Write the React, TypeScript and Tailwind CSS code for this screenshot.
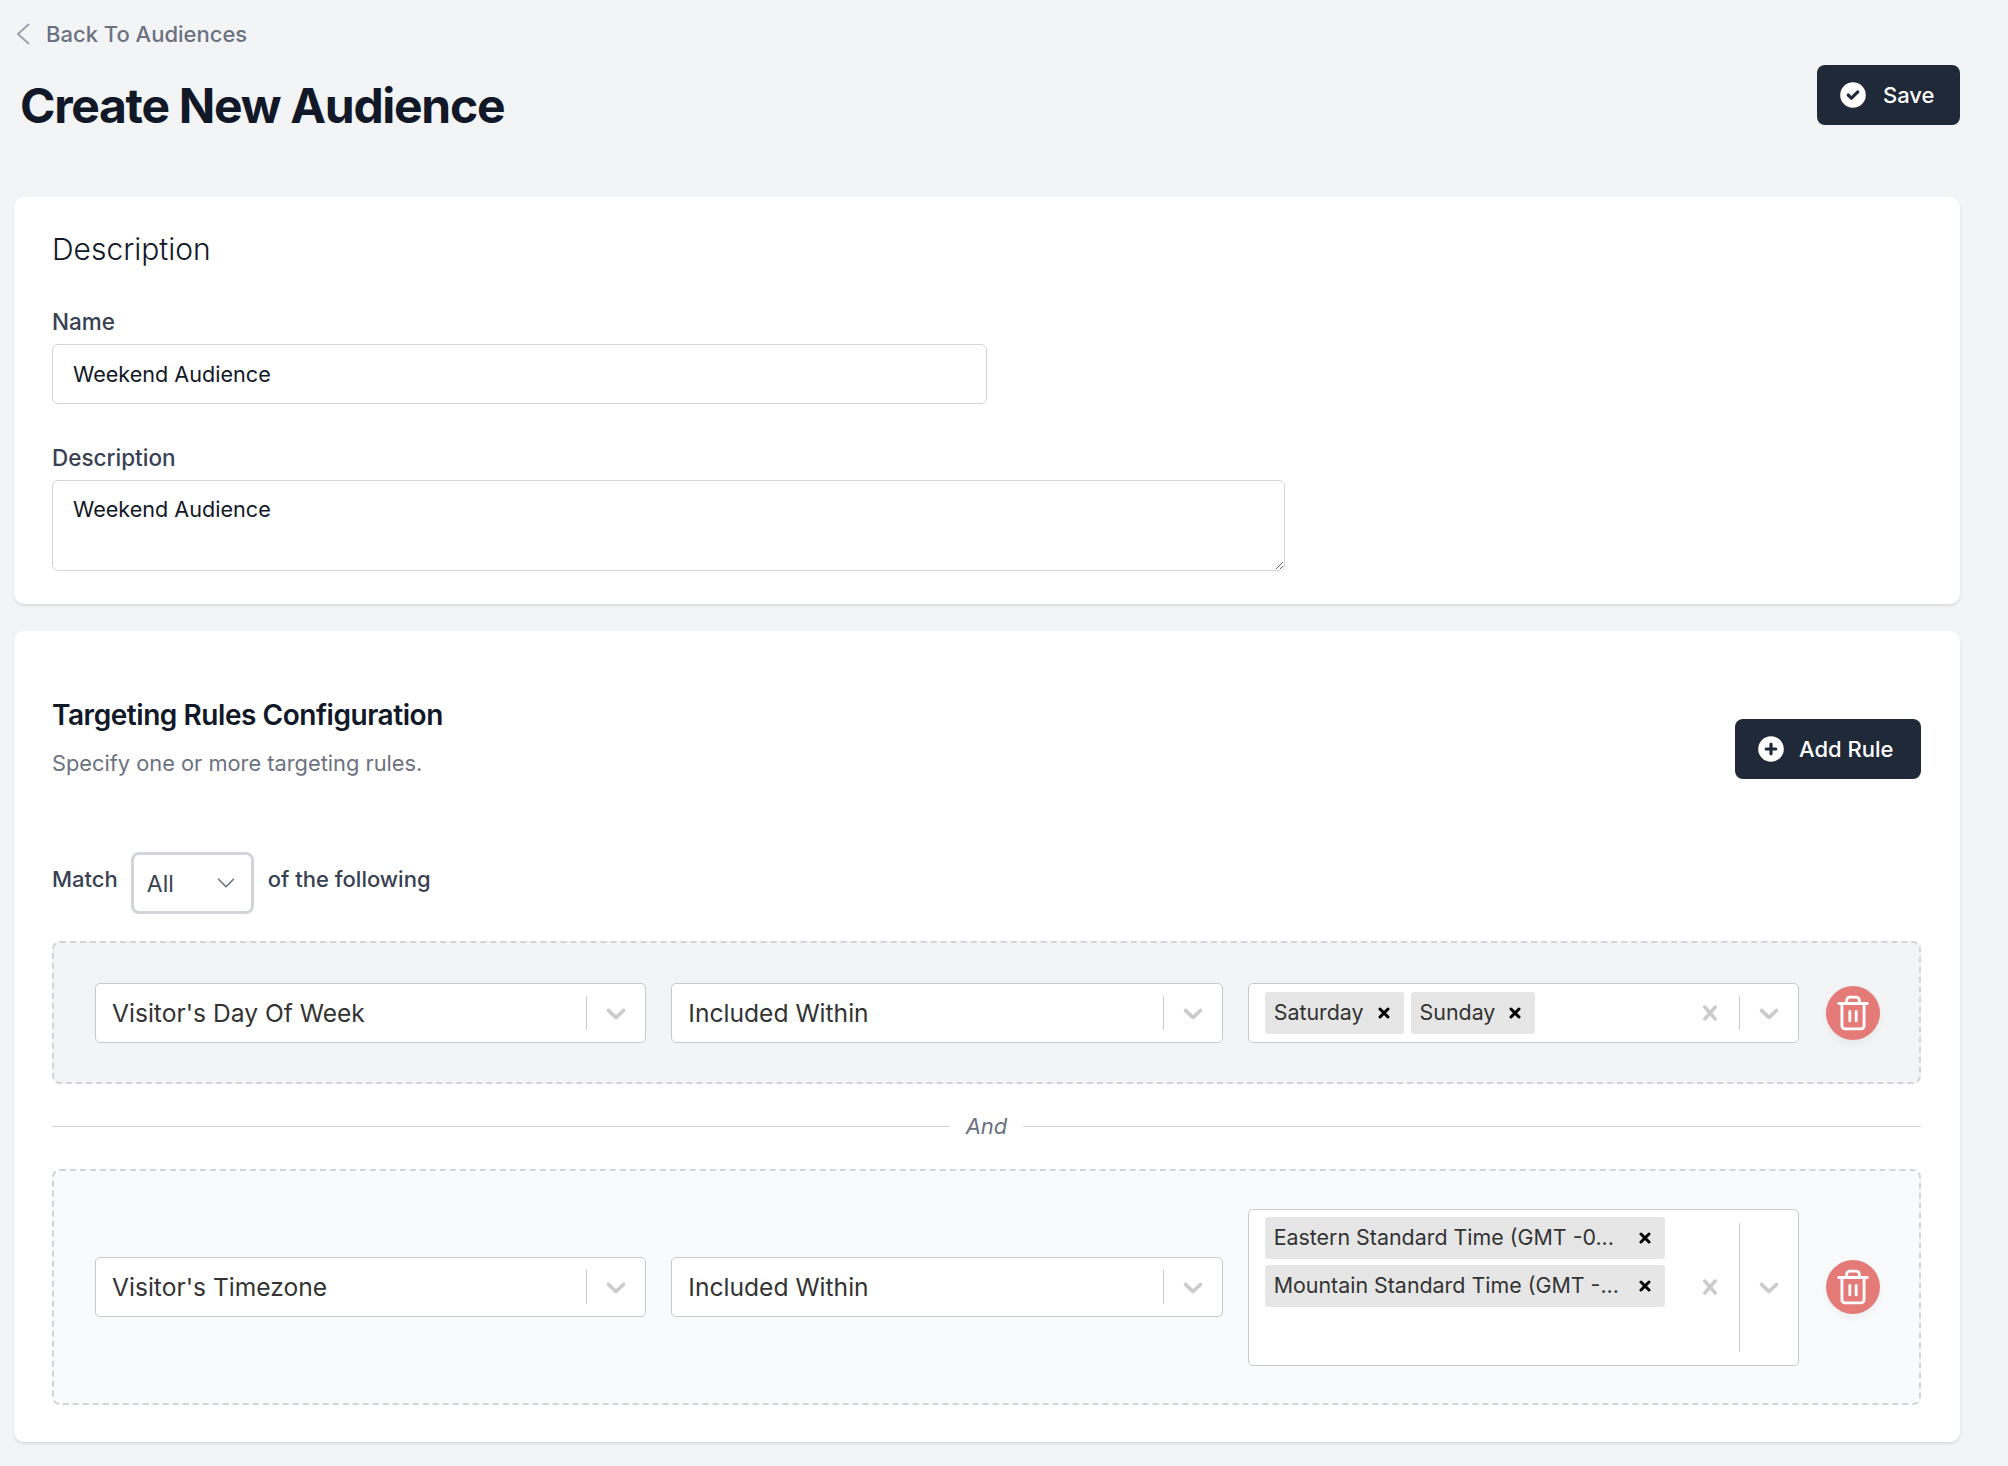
import type { ReactNode } from "react";
import { ChevronDown, Trash2 } from "lucide-react";
import { HiCheckCircle, HiPlusCircle } from "react-icons/hi";

function Chevron() {
  return (
    <svg viewBox="0 0 20 20" className="w-[32px] h-[32px] fill-[#cccccc]">
      <path d="M4.516 7.548c0.436-0.446 1.043-0.481 1.576 0l3.908 3.747 3.908-3.747c0.533-0.481 1.141-0.446 1.574 0 0.436 0.445 0.408 1.197 0 1.615-0.406 0.418-4.695 4.502-4.695 4.502-0.217 0.223-0.502 0.335-0.787 0.335s-0.57-0.112-0.789-0.335c0 0-4.287-4.084-4.695-4.502s-0.436-1.17 0-1.615z" />
    </svg>
  );
}

function Clear() {
  return (
    <svg viewBox="0 0 20 20" className="w-[30px] h-[30px] fill-[#cccccc]">
      <path d="M14.348 14.849c-0.469 0.469-1.229 0.469-1.697 0l-2.651-3.030-2.651 3.029c-0.469 0.469-1.229 0.469-1.697 0-0.469-0.469-0.469-1.229 0-1.697l2.758-3.15-2.759-3.152c-0.469-0.469-0.469-1.228 0-1.697s1.228-0.469 1.697 0l2.652 3.031 2.651-3.031c0.469-0.469 1.228-0.469 1.697 0s0.469 1.229 0 1.697l-2.758 3.152 2.758 3.15c0.469 0.469 0.469 1.229 0 1.698z" />
    </svg>
  );
}

function Select({ value }: { value: string }) {
  return (
    <div className="flex-1 h-[60px] bg-white border border-[#c6c9ce] rounded-[5px] flex items-center min-w-0">
      <span className="flex-1 pl-[16px] text-[24.6px] leading-[32px] text-[#333333] truncate">{value}</span>
      <span className="w-px h-[34px] bg-[#cccccc]" />
      <span className="w-[58px] flex items-center justify-center">
        <Chevron />
      </span>
    </div>
  );
}

function Chip({ label, wide }: { label: string; wide?: boolean }) {
  return (
    <span className={`h-[42px] bg-[#e6e6e6] rounded-[3px] flex items-center pl-[9px] text-[21.4px] text-[#333333] whitespace-nowrap ${wide ? "w-[400px]" : ""}`}>
      <span className={wide ? "flex-1" : ""}>{label}</span>
      <span className="w-[40px] flex items-center justify-center">
        <svg viewBox="0 0 12 12" className="w-[12px] h-[12px] stroke-black" strokeWidth="3" strokeLinecap="round">
          <path d="M2 2l8 8M10 2l-8 8" />
        </svg>
      </span>
    </span>
  );
}

function TrashButton() {
  return (
    <button className="ml-[27px] w-[54px] h-[54px] rounded-full bg-[#e57b78] flex items-center justify-center shadow-[0_4px_8px_rgba(0,0,0,0.05)] shrink-0">
      <Trash2 className="w-[38px] h-[38px] text-white" strokeWidth={1.8} />
    </button>
  );
}

function MultiSelect({ tall, children }: { tall?: boolean; children: ReactNode }) {
  return (
    <div className={`flex-1 bg-white border border-[#c6c9ce] rounded-[5px] flex items-center min-w-0 ${tall ? "h-[157px]" : "h-[60px]"}`}>
      <div className={`flex-1 pl-[16px] flex min-w-0 ${tall ? "flex-col gap-[6px] self-start pt-[7px]" : "gap-[7px] items-center"}`}>{children}</div>
      <span className="w-[58px] flex items-center justify-center">
        <Clear />
      </span>
      <span className={`w-px bg-[#cccccc] ${tall ? "h-[129px]" : "h-[34px]"}`} />
      <span className="w-[58px] flex items-center justify-center">
        <Chevron />
      </span>
    </div>
  );
}

export default function App() {
  return (
    <div className="min-h-screen bg-[#f3f4f6] pl-[14px] pr-[48px] pt-[19px] font-['Inter',sans-serif]">
      <a className="flex items-center h-[30px] text-[#6b7280] text-[22px] font-medium">
        <svg viewBox="0 0 14 22" className="w-[14px] h-[22px] ml-[2px] mr-[16px] fill-none stroke-[#9ca3af]" strokeWidth="2">
          <path d="M13 1L2 11l11 10" />
        </svg>
        Back To Audiences
      </a>
      <div className="flex items-start justify-between mt-[16px] h-[132px]">
        <h1 className="ml-[6px] mt-[13px] text-[48px] leading-[56px] font-bold text-[#111827] tracking-[-1.3px]">Create New Audience</h1>
        <button className="w-[143px] h-[60px] rounded-[8px] bg-[#1f2937] text-white flex items-center pl-[20px] gap-[14px] text-[22px] font-medium">
          <HiCheckCircle className="w-[32px] h-[32px]" />
          Save
        </button>
      </div>

      <section className="bg-white rounded-[10px] shadow-[0_2px_3px_rgba(0,0,0,0.1)] h-[407px] px-[38px] pt-[33px]">
        <h2 className="text-[30px] leading-[38px] font-light text-[#111827]">Description</h2>
        <label className="block mt-[42px] text-[22.5px] leading-[24px] font-medium text-[#374151]">Name</label>
        <input readOnly value="Weekend Audience" className="block mt-[10px] w-[935px] h-[60px] border border-[#d1d5db] rounded-[6px] px-[20px] text-[21.6px] text-[#111827] outline-none" />
        <label className="block mt-[42px] text-[22.5px] leading-[24px] font-medium text-[#374151]">Description</label>
        <textarea readOnly value="Weekend Audience" className="block mt-[10px] w-[1233px] h-[91px] border border-[#d1d5db] rounded-[6px] px-[20px] py-[12px] text-[21.6px] text-[#111827] outline-none" />
      </section>

      <section className="mt-[27px] bg-white rounded-[10px] shadow-[0_2px_3px_rgba(0,0,0,0.1)] h-[811px] pl-[38px] pr-[39px] pt-[66px]">
        <div className="flex items-start justify-between">
          <div>
            <h2 className="text-[28px] leading-[36px] font-semibold text-[#111827] tracking-[-0.45px]">Targeting Rules Configuration</h2>
            <p className="mt-[15px] text-[21.8px] leading-[30px] text-[#6b7280]">Specify one or more targeting rules.</p>
          </div>
          <button className="mt-[22px] w-[186px] h-[60px] rounded-[8px] bg-[#1f2937] text-white flex items-center pl-[20px] gap-[12px] text-[22px] font-medium">
            <HiPlusCircle className="w-[32px] h-[32px]" />
            Add Rule
          </button>
        </div>

        <div className="flex items-center mt-[73px] text-[22px] font-medium text-[#374151]">
          <span className="pb-[8px]">Match</span>
          <div className="ml-[13px] mr-[14px] w-[123px] h-[62px] border-[3px] border-[#d1d5db] rounded-[8px] flex items-center justify-between pl-[13px] pr-[10px]">
            <span className="text-[23px] font-normal mt-[2px]">All</span>
            <ChevronDown className="w-[30px] h-[30px] text-[#6b7280]" strokeWidth={1.3} />
          </div>
          <span className="pb-[8px]">of the following</span>
        </div>

        <div className="mt-[27px] h-[143px] bg-[#f3f4f6] border-2 border-dashed border-[#d1d5db] rounded-[8px] flex items-center pl-[41px] pr-[39px]">
          <div className="flex-1 flex items-center gap-[25px] min-w-0">
            <Select value="Visitor's Day Of Week" />
            <Select value="Included Within" />
            <MultiSelect>
              <Chip label="Saturday" />
              <Chip label="Sunday" />
            </MultiSelect>
          </div>
          <TrashButton />
        </div>

        <div className="mt-[27px] h-[30px] flex items-center gap-[16px]">
          <span className="flex-1 h-px bg-[#d1d5db]" />
          <span className="text-[22px] italic text-[#6b7280]">And</span>
          <span className="flex-1 h-px bg-[#d1d5db]" />
        </div>

        <div className="mt-[28px] h-[236px] bg-[#f9fafb] border-2 border-dashed border-[#d1d5db] rounded-[8px] flex items-center pl-[41px] pr-[39px]">
          <div className="flex-1 flex items-center gap-[25px] min-w-0">
            <Select value="Visitor's Timezone" />
            <Select value="Included Within" />
            <MultiSelect tall>
              <Chip wide label="Eastern Standard Time (GMT -0..." />
              <Chip wide label="Mountain Standard Time (GMT -..." />
            </MultiSelect>
          </div>
          <TrashButton />
        </div>
      </section>
    </div>
  );
}
